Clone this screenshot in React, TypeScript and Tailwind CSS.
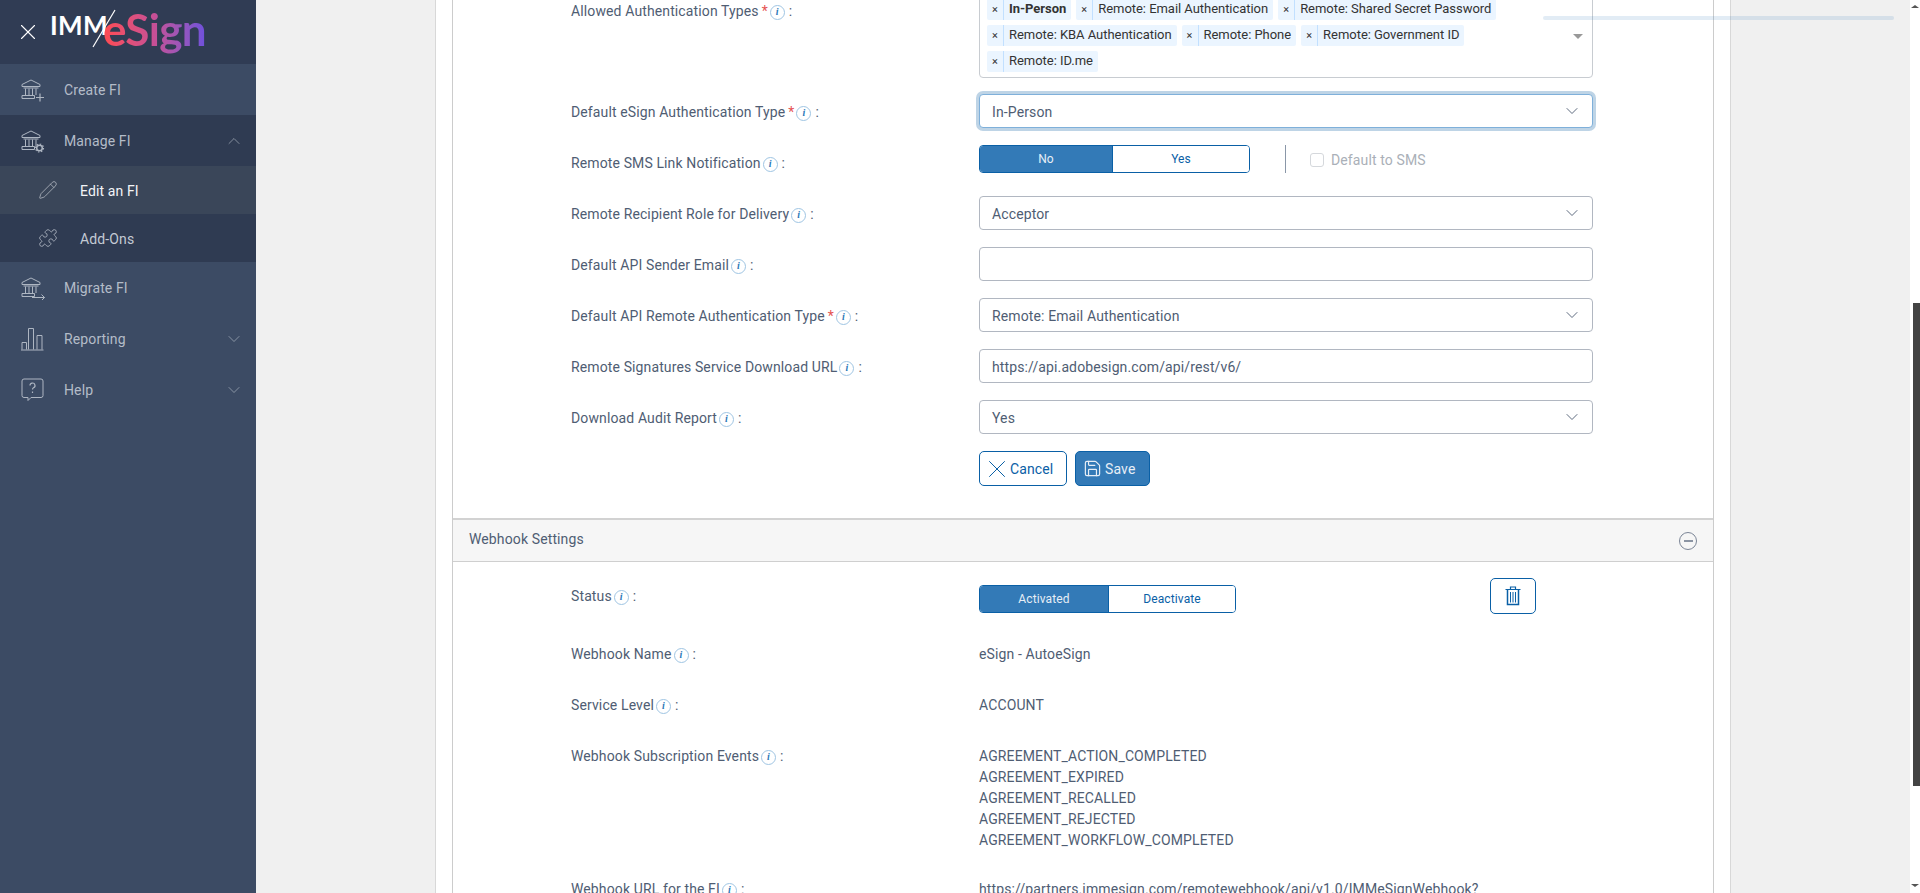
import React from "react";
import { ChevronDown, ChevronUp, X, Save, Pencil, Puzzle } from "lucide-react";

const font = { fontFamily: "Roboto, sans-serif" };

function Bank({ extra }: { extra?: React.ReactNode }) {
  return (
    <svg width="24" height="24" viewBox="0 0 24 24" fill="none" stroke="currentColor" strokeWidth="1">
      <path d="M1 6.500 10 2l9 4.500V8.500H1z" />
      <path d="M2.500 10h15M4.500 10.500v6.500M8 10.500v6.500M11.500 10.500v6.500M15 10.500v6.500" />
      <path d="M1 17.500h12.500v3H1z" />
      {extra}
    </svg>
  );
}

const plus = <path d="M19 15.500v8M15 19.500h8" strokeWidth="1.2" />;
const gear = (
  <g>
    <circle cx="18.500" cy="19" r="2.800" strokeWidth="1.500" />
    <circle cx="18.500" cy="19" r="4" strokeDasharray="1.500 1.600" strokeWidth="1.200" />
  </g>
);
const arrow = <path d="M11 21.500h12.500M20.500 18.500l3 3-3 3" strokeWidth="1" />;

function Chart() {
  return (
    <svg width="24" height="24" viewBox="0 0 24 24" fill="none" stroke="currentColor" strokeWidth="1">
      <path d="M0 23h22.500M1 22.500v-7h4.500v7M7.500 22.500V1.500h5v21M16 22.500v-14h5v14" />
    </svg>
  );
}

function HelpIcon() {
  return (
    <svg width="24" height="24" viewBox="0 0 24 24" fill="none" stroke="currentColor" strokeWidth="1">
      <path d="M3 1h17a2 2 0 0 1 2 2v14.500a2 2 0 0 1-2 2H10l-3 3v-3H3a2 2 0 0 1-2-2V3a2 2 0 0 1 2-2z" />
      <path d="M9 7.500a2.500 2.500 0 1 1 3.500 2.300c-.7.400-1 .9-1 1.700" strokeWidth="1.200" />
      <path d="M11.500 13.500v1.500" strokeWidth="1.200" />
    </svg>
  );
}

function TrashIcon() {
  return (
    <svg width="16" height="20" viewBox="0 0 16 20" fill="none" stroke="currentColor" strokeWidth="1.200">
      <path d="M0.500 3.500h15M5.500 3V1h5v2" />
      <path d="M2.500 4v14.500h11V4" strokeWidth="1.500" />
      <path d="M5.500 6v10.500M8 6v10.500M10.500 6v10.500" strokeWidth="1" />
    </svg>
  );
}

function NavItem({ icon, label, bg, chevron, sub, white }: { icon: React.ReactNode; label: string; bg: string; chevron?: "up" | "down"; sub?: boolean; white?: boolean }) {
  return (
    <div className={`flex items-center ${sub ? "h-[48px]" : "h-[51px]"} ${bg} ${sub ? "pl-[36px]" : "pl-[21px]"} pr-[12px] text-[14px]`}>
      <span className={`flex w-[24px] justify-center ${white ? "text-[#aeb4be]" : "text-[#aeb6c2]"}`}>{icon}</span>
      <span className={`${sub ? "ml-[20px] mt-[2px]" : "ml-[19px] mt-[1px]"} flex-1 ${white ? "text-[#f2f4f7]" : sub ? "text-[#c3cad4]" : "text-[#b4bcc8]"}`}>{label}</span>
      {chevron === "up" && <ChevronUp size={20} strokeWidth={0.8} className="text-[#aeb6c2]" />}
      {chevron === "down" && <ChevronDown size={20} strokeWidth={0.8} className="text-[#aeb6c2]" />}
    </div>
  );
}

function Sidebar() {
  return (
    <aside className="flex w-[256px] shrink-0 flex-col bg-[#3c4b64]">
      <div className="relative flex h-[64px] items-center bg-[#303c54] pl-[15px]">
        <X size={26} strokeWidth={1} className="text-white" />
        <span className="absolute left-[50px] top-[12px] text-[26px] font-bold leading-[27px] tracking-[0.4px] text-white" style={{ fontFamily: "Lato, sans-serif" }}>IMM</span>
        <svg width="26" height="40" viewBox="0 0 26 40" className="absolute left-[91px] top-[9px]" fill="none" stroke="#fff" strokeWidth="1.200">
          <path d="M24 1 2 38" />
        </svg>
        <span
          className="absolute left-[103px] top-[1px] bg-gradient-to-r from-[#ff4a4f] via-[#c64f96] to-[#6e50dc] bg-clip-text pb-[8px] text-[44px] font-bold leading-[56px] tracking-[-0.7px] text-transparent"
          style={{ fontFamily: "Lato, sans-serif" }}
        >
          eSign
        </span>
      </div>
      <NavItem icon={<Bank extra={plus} />} label="Create FI" bg="bg-[#3c4b64]" />
      <NavItem icon={<Bank extra={gear} />} label="Manage FI" bg="bg-[#2f3b52]" chevron="up" />
      <NavItem icon={<Pencil size={20} strokeWidth={1} />} label="Edit an FI" bg="bg-[#3a4659]" sub white />
      <NavItem icon={<Puzzle size={20} strokeWidth={1} />} label="Add-Ons" bg="bg-[#2f3b52]" sub />
      <NavItem icon={<Bank extra={arrow} />} label="Migrate FI" bg="bg-[#3c4b64]" />
      <NavItem icon={<Chart />} label="Reporting" bg="bg-[#3c4b64]" chevron="down" />
      <NavItem icon={<HelpIcon />} label="Help" bg="bg-[#3c4b64]" chevron="down" />
    </aside>
  );
}

function Info() {
  return (
    <span
      className="ml-[2px] mr-[3px] inline-flex h-[15px] w-[15px] items-center justify-center rounded-full border border-[#9fc5e3] align-[1px] text-[10px] font-bold italic leading-none text-[#2b78b8]"
      style={{ fontFamily: "'Liberation Serif', serif" }}
    >
      i
    </span>
  );
}

function Label({ text, req }: { text: string; req?: boolean }) {
  return (
    <span className="block w-[408px] shrink-0 whitespace-nowrap text-[14px] leading-[21px] text-[#4f5d73]">
      {text}
      {req && <span className="ml-[3px] text-[#e55353]">*</span>}
      <Info />
      <span className="ml-[1px]">:</span>
    </span>
  );
}

function Field({ text, children, req, h = "h-[51px]" }: { text: string; req?: boolean; children: React.ReactNode; h?: string }) {
  return (
    <div className={`flex ${h}`}>
      <div className="pt-[8px]">
        <Label text={text} req={req} />
      </div>
      {children}
    </div>
  );
}

function Select({ value, focus }: { value: string; focus?: boolean }) {
  return (
    <div
      className={`flex h-[34px] w-[614px] items-center justify-between rounded-[4px] border bg-white px-[12px] text-[14px] text-[#4f5d73] ${focus ? "border-[#7fb0da] shadow-[0_0_0_3px_#bed4e6]" : "border-[#b1b7c1]"}`}
    >
      <span className="mt-[2px]">{value}</span>
      <ChevronDown size={20} strokeWidth={1.1} className="-mr-[2px] text-[#4f5d73]" />
    </div>
  );
}

function Input({ value }: { value?: string }) {
  return (
    <div className="flex h-[34px] w-[614px] items-center rounded-[4px] border border-[#b1b7c1] bg-white px-[12px] text-[14px] text-[#4f5d73]">
      <span className="mt-[2px]">{value}</span>
    </div>
  );
}

function Chip({ text, bold }: { text: string; bold?: boolean }) {
  return (
    <span className="flex h-[21px] items-center rounded-[2px] bg-[#ebf5ff] text-[13px] tracking-[-0.04px] text-[#333]">
      <span className="flex h-full w-[17px] items-center justify-center border-r border-[#c2e0ff] text-[11px] leading-none">×</span>
      <span className={`-mt-px px-[5px] ${bold ? "font-bold" : ""}`}>{text}</span>
    </span>
  );
}

function Toggle({ a, b, w, split }: { a: string; b: string; w: string; split: string }) {
  return (
    <div className={`flex h-[28px] ${w} overflow-hidden rounded-[4px] border border-[#0a60a6] text-[12px]`}>
      <span className={`flex ${split} items-center justify-center bg-[#337ab7] text-[#e6eef6]`}>{a}</span>
      <span className="flex flex-1 items-center justify-center border-l border-[#0a60a6] bg-white text-[#0a60a6]">{b}</span>
    </div>
  );
}

function InfoRow({ text, children, h }: { text: string; children: React.ReactNode; h: string }) {
  return (
    <div className={`flex ${h} text-[14px] leading-[21px] text-[#4f5d73]`}>
      <Label text={text} />
      <div className="whitespace-nowrap">{children}</div>
    </div>
  );
}

function Form() {
  return (
    <div className="h-[893px] overflow-hidden">
      <div className="flex h-[94px] pl-[118px]">
        <div className="pt-[1px]">
          <Label text="Allowed Authentication Types" req />
        </div>
        <div className="relative -mt-[7px] h-[85px] w-[614px] rounded-[4px] border border-[#c8ccd1] bg-white pl-[7px] pt-[5px]">
          <div className="flex w-[560px] flex-wrap gap-x-[5px] gap-y-[5px]">
            <Chip text="In-Person" bold />
            <Chip text="Remote: Email Authentication" />
            <Chip text="Remote: Shared Secret Password" />
            <Chip text="Remote: KBA Authentication" />
            <Chip text="Remote: Phone" />
            <Chip text="Remote: Government ID" />
            <Chip text="Remote: ID.me" />
          </div>
          <span className="absolute right-[9px] top-[40px] h-0 w-0 border-x-[5px] border-t-[5px] border-x-transparent border-t-[#999]" />
        </div>
      </div>
      <div className="pl-[118px]">
        <Field text="Default eSign Authentication Type" req>
          <Select value="In-Person" focus />
        </Field>
        <Field text="Remote SMS Link Notification">
          <div className="flex items-start">
            <Toggle a="No" b="Yes" w="w-[271px]" split="w-[132px]" />
            <span className="ml-[35px] h-[28px] w-px bg-[#8a97a8]" />
            <span className="ml-[24px] mt-[8px] h-[14px] w-[14px] rounded-[3px] border border-[#d5d8dc] bg-white" />
            <span className="ml-[7px] mt-[5px] text-[14px] leading-[21px] text-[#aab0b8]">Default to SMS</span>
          </div>
        </Field>
        <Field text="Remote Recipient Role for Delivery">
          <Select value="Acceptor" />
        </Field>
        <Field text="Default API Sender Email">
          <Input />
        </Field>
        <Field text="Default API Remote Authentication Type" req>
          <Select value="Remote: Email Authentication" />
        </Field>
        <Field text="Remote Signatures Service Download URL">
          <Input value="https://api.adobesign.com/api/rest/v6/" />
        </Field>
        <Field text="Download Audit Report">
          <Select value="Yes" />
        </Field>
        <div className="flex h-[67px] pl-[408px]">
          <div className="flex h-[35px] w-[88px] items-center rounded-[5px] border border-[#0a60a6] bg-white pl-[2px] text-[14px] text-[#0a60a6]">
            <X size={30} strokeWidth={0.8} className="-mr-[2px]" />
            <span className="mt-[1px]">Cancel</span>
          </div>
          <div className="ml-[8px] flex h-[35px] w-[75px] items-center rounded-[5px] border border-[#0a60a6] bg-[#337ab7] pl-[7px] text-[14px] text-[#e6eef6]">
            <Save size={19} strokeWidth={1.5} className="mr-[3px]" />
            <span className="mt-[1px]">Save</span>
          </div>
        </div>
      </div>
      <div className="flex h-[44px] items-center justify-between border-b border-t-2 border-b-[#cfcfcf] border-t-[#d2d2d2] bg-[#f6f6f6] pl-[16px] pr-[16px] text-[14px] text-[#4f5d73]">
        <span className="-mt-[2px]">Webhook Settings</span>
        <span className="flex h-[18px] w-[18px] items-center justify-center rounded-full border border-[#7b8596]">
          <span className="h-[2px] w-[9px] bg-[#8b94a3]" />
        </span>
      </div>
      <div className="pl-[118px] pt-[23px]">
        <div className="flex h-[59px] text-[14px]">
          <div className="pt-[1px]">
            <Label text="Status" />
          </div>
          <div className="flex items-start">
            <Toggle a="Activated" b="Deactivate" w="w-[257px]" split="w-[128px]" />
            <div className="-mt-[7px] ml-[254px] flex h-[36px] w-[46px] items-center justify-center rounded-[5px] border border-[#0a60a6] bg-white text-[#0a60a6]">
              <TrashIcon />
            </div>
          </div>
        </div>
        <InfoRow text="Webhook Name" h="h-[51px]">eSign - AutoeSign</InfoRow>
        <InfoRow text="Service Level" h="h-[51px]">ACCOUNT</InfoRow>
        <InfoRow text="Webhook Subscription Events" h="h-[133px]">
          <div>AGREEMENT_ACTION_COMPLETED</div>
          <div>AGREEMENT_EXPIRED</div>
          <div>AGREEMENT_RECALLED</div>
          <div>AGREEMENT_REJECTED</div>
          <div>AGREEMENT_WORKFLOW_COMPLETED</div>
        </InfoRow>
        <InfoRow text="Webhook URL for the FI" h="h-[42px]">https://partners.immesign.com/remotewebhook/api/v1.0/IMMeSignWebhook?</InfoRow>
      </div>
    </div>
  );
}

function Scrollbar() {
  return (
    <div className="relative flex w-[10px] shrink-0 flex-col bg-white">
      <span className="ml-[1px] mt-[5px] h-0 w-0 border-x-[4px] border-b-[3px] border-x-transparent border-b-[#555]" />
      <span className="ml-[3px] mt-[295px] h-[483px] w-[7px] bg-[#444]" />
      <span className="ml-[1px] mt-[98px] h-0 w-0 border-x-[4px] border-t-[3px] border-x-transparent border-t-[#555]" />
    </div>
  );
}

export default function App() {
  return (
    <div className="flex h-[893px] w-[1920px] overflow-hidden tracking-[0.12px]" style={font}>
      <Sidebar />
      <main className="relative h-[893px] flex-1 overflow-hidden bg-[#f0f0f0]">
        <div className="ml-[179px] h-[893px] w-[1296px] border-x border-[#d8d8d8] bg-white pl-[16px] pr-[16px]">
          <div className="h-[893px] border-x border-[#cccccc] bg-white">
            <Form />
          </div>
        </div>
        <div className="absolute left-[1287px] top-[16px] h-[4px] w-[351px] rounded-full bg-[#337ab7]/[0.14]" />
      </main>
      <Scrollbar />
    </div>
  );
}
